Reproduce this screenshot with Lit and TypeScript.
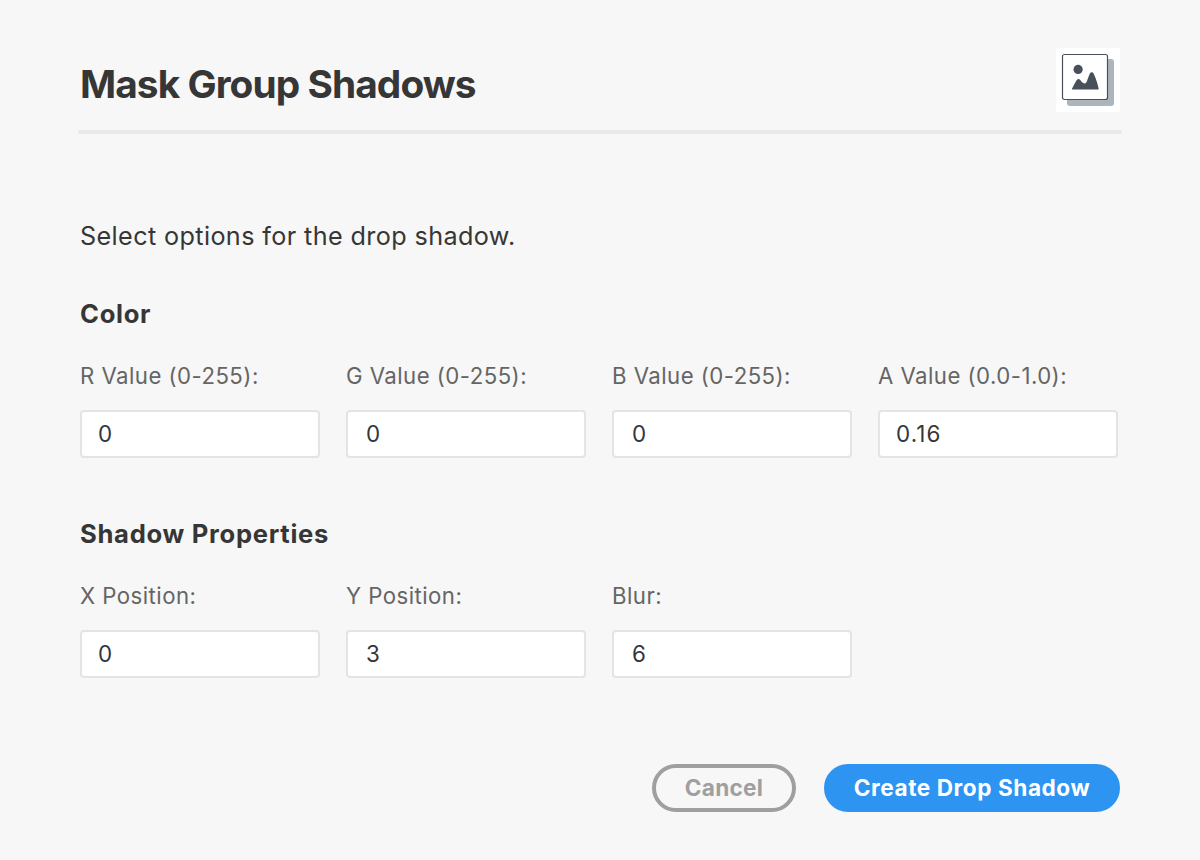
import { LitElement, html, css } from "lit";
import { customElement } from "lit/decorators.js";

interface Field { label: string; value: string; inset: number; }

const colorFields: Field[] = [
  { label: "R Value (0-255):", value: "0", inset: 16 },
  { label: "G Value (0-255):", value: "0", inset: 18 },
  { label: "B Value (0-255):", value: "0", inset: 18 },
  { label: "A Value (0.0-1.0):", value: "0.16", inset: 16 },
];

const shadowFields: Field[] = [
  { label: "X Position:", value: "0", inset: 16 },
  { label: "Y Position:", value: "3", inset: 18 },
  { label: "Blur:", value: "6", inset: 18 },
];

@customElement("app-root")
export class AppRoot extends LitElement {
  static styles = css`
    :host {
      display: block;
      box-sizing: border-box;
      width: 1200px;
      height: 860px;
      padding: 48px 80px;
      background: #f7f7f7;
      color: #363636;
      font-family: Inter, "Liberation Sans", sans-serif;
      overflow: hidden;
    }
    .header {
      display: flex;
      justify-content: space-between;
      height: 82px;
    }
    .title {
      margin: 0;
      font-size: 38.8px;
      line-height: 72px;
      font-weight: 700;
      letter-spacing: -0.92px;
      white-space: nowrap;
    }
    .logo { display: block; width: 64px; height: 64px; }
    .rule {
      height: 4px;
      margin: 0 -2px;
      border-radius: 2px;
      background: #e9e9e9;
    }
    .intro {
      margin: 84px 0 0;
      font-size: 25.2px;
      line-height: 36px;
      letter-spacing: 0.38px;
    }
    .heading {
      margin: 42px 0 0;
      font-size: 25.6px;
      line-height: 36px;
      font-weight: 700;
      letter-spacing: 0.7px;
    }
    .second { margin-top: 58px; }
    .fields {
      display: grid;
      grid-template-columns: repeat(4, 240px);
      column-gap: 26px;
      margin-top: 28px;
    }
    .field { display: flex; flex-direction: column; gap: 18px; }
    .label {
      font-size: 22.2px;
      line-height: 32px;
      letter-spacing: 0.46px;
      color: #656565;
      white-space: nowrap;
    }
    .input {
      box-sizing: border-box;
      width: 240px;
      height: 48px;
      border: 2px solid #e4e4e4;
      border-radius: 4px;
      background: #fff;
      color: #363636;
      font: 400 22.4px/42px Inter, sans-serif;
      letter-spacing: 1.1px;
      outline: none;
    }
    .actions {
      display: flex;
      justify-content: flex-end;
      gap: 28px;
      margin-top: 86px;
    }
    .button {
      box-sizing: border-box;
      height: 48px;
      padding: 0;
      border: 4px solid #9f9f9f;
      border-radius: 24px;
      background: transparent;
      color: #9f9f9f;
      font: 700 22.6px/40px Inter, sans-serif;
      letter-spacing: 0.3px;
      white-space: nowrap;
    }
    .cancel { width: 144px; }
    .primary {
      width: 296px;
      letter-spacing: 0.56px;
      border-color: #2d94f1;
      background: #2d94f1;
      color: #fff;
    }
  `;

  private renderFields(fields: Field[]) {
    return html`<div class="fields">
      ${fields.map(
        (f) => html`<label class="field">
          <span class="label">${f.label}</span>
          <input class="input" style="padding: 0 ${f.inset}px 2px" .value=${f.value} />
        </label>`
      )}
    </div>`;
  }

  render() {
    return html`
      <header class="header">
        <h1 class="title">Mask Group Shadows</h1>
        <svg class="logo" viewBox="0 0 64 64">
          <rect width="64" height="64" fill="#fff" />
          <rect x="11" y="11" width="47" height="47" rx="3" fill="#adb5bc" />
          <rect x="6.5" y="6.5" width="45" height="45" rx="2" fill="#fff" stroke="#495059" stroke-width="1.2" />
          <circle cx="22.1" cy="21.4" r="4.6" fill="#495059" />
          <path
            d="M17 41.6C16 41.6 15.8 41.1 16.2 40.3C17.4 38.1 18.9 35.2 20.4 32.6C21.6 30.5 22.9 30.4 24.3 32C25.6 33.6 26.8 35.3 28.4 35.5C30.2 35.6 30.9 33.2 31.6 31.2C32.4 29 33.1 27 33.9 25.4C34.9 23.7 36.6 23.7 37.6 25.6C39.8 30.2 41.5 35.4 42.6 40.5C42.8 41.2 42.5 41.6 41.7 41.6Z"
            fill="#495059"
          />
        </svg>
      </header>
      <div class="rule"></div>
      <p class="intro">Select options for the drop shadow.</p>
      <h2 class="heading">Color</h2>
      ${this.renderFields(colorFields)}
      <h2 class="heading second">Shadow Properties</h2>
      ${this.renderFields(shadowFields)}
      <div class="actions">
        <button class="button cancel">Cancel</button>
        <button class="button primary">Create Drop Shadow</button>
      </div>
    `;
  }
}
